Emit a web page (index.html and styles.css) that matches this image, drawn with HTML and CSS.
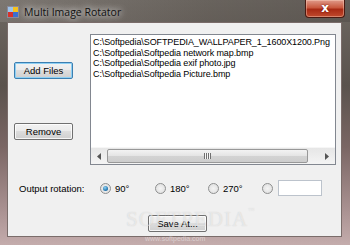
FILE: index.html
```html
<!DOCTYPE html>
<html>
<head>
<meta charset="utf-8">
<link rel="stylesheet" href="styles.css">
</head>
<body>
<div class="window">
  <div class="titlebar">
    <svg class="app-icon" width="12" height="12" viewBox="0 0 12 12">
      <rect x="0.5" y="0.5" width="11" height="11" fill="#f4f4f4" stroke="#8a8a9a"/>
      <rect x="6" y="1" width="5" height="5" fill="#f6c21c"/>
      <rect x="1" y="6" width="5" height="5" fill="#d8322a"/>
      <rect x="1" y="1" width="5" height="5" fill="#9cc3ea"/>
      <rect x="6" y="6" width="5" height="5" fill="#3b6fd0"/>
    </svg>
    <span class="title">Multi Image Rotator</span>
    <div class="close"><span>x</span></div>
  </div>
  <div class="client">
    <div class="top">
      <div class="buttons">
        <button class="btn default">Add Files</button>
        <button class="btn remove">Remove</button>
      </div>
      <div class="listbox">
        <div class="items">
          <div>C:\Softpedia\SOFTPEDIA_WALLPAPER_1_1600X1200.Png</div>
          <div>C:\Softpedia\Softpedia network map.bmp</div>
          <div>C:\Softpedia\Softpedia exif photo.jpg</div>
          <div>C:\Softpedia\Softpedia Picture.bmp</div>
        </div>
        <div class="hscroll">
          <div class="arrow"><svg width="4" height="7" viewBox="0 0 4 7"><path d="M4 0 L0 3.5 L4 7 Z" fill="#555"/></svg></div>
          <div class="thumb"><span class="grip"></span></div>
          <div class="track"></div>
          <div class="arrow"><svg width="4" height="7" viewBox="0 0 4 7"><path d="M0 0 L4 3.5 L0 7 Z" fill="#555"/></svg></div>
        </div>
      </div>
    </div>
    <div class="options">
      <span class="label">Output rotation:</span>
      <span class="opt o1"><span class="radio checked"></span>90°</span>
      <span class="opt o2"><span class="radio"></span>180°</span>
      <span class="opt o3"><span class="radio"></span>270°</span>
      <span class="opt o4"><span class="radio"></span></span>
      <span class="textbox"></span>
    </div>
    <div class="bottom">
      <button class="btn">Save At...</button>
    </div>
    <div class="watermark">SOFTPEDIA<sup>™</sup></div>
  </div>
  <div class="wm-url">www.softpedia.com</div>
</div>
</body>
</html>
```

FILE: styles.css
```css
html, body {
  margin: 0;
  padding: 0;
  width: 350px;
  height: 245px;
  overflow: hidden;
  background: #7a6a68;
}
.window {
  position: relative;
  width: 350px;
  height: 245px;
  box-sizing: border-box;
  display: flex;
  flex-direction: column;
  padding: 0 8px 8px 7px;
  background: linear-gradient(to bottom, #6e6862 0%, #5a524d 35%, #7a6664 60%, #a89090 85%, #c4acac 100%);
  font-family: "Liberation Sans", Arial, sans-serif;
  font-size: 9px;
  color: #000;
}
.titlebar {
  height: 22px;
  display: flex;
  align-items: flex-start;
  background: linear-gradient(to right, rgba(255,255,255,0.1), rgba(0,0,0,0.05) 60%, rgba(0,0,0,0.12));
  margin: 0 -8px 0 -7px;
  padding-left: 7px;
}
.app-icon {
  margin-top: 6px;
  flex: none;
}
.title {
  margin-left: 5px;
  margin-top: 5px;
  font-family: "Open Sans", "Noto Sans", sans-serif;
  font-size: 10.5px;
  color: #111;
  text-shadow: 0 0 6px rgba(255,255,255,0.9), 0 0 10px rgba(255,255,255,0.6);
}
.close {
  margin-left: auto;
  margin-right: 5px;
  width: 40px;
  height: 18px;
  box-sizing: border-box;
  border: 1px solid #4a1a12;
  border-top: none;
  border-radius: 0 0 4px 4px;
  background: linear-gradient(to bottom, #e09a8a 0%, #c8583e 45%, #a82a14 55%, #c04a2e 100%);
  display: flex;
  align-items: center;
  justify-content: center;
  box-shadow: inset 0 0 0 1px rgba(255,220,200,0.4);
}
.close span {
  color: #fff;
  font-family: "DejaVu Sans", sans-serif;
  font-weight: bold;
  font-size: 12px;
  line-height: 12px;
  margin-top: -2px;
  text-shadow: 0 0 2px #600;
}
.client {
  position: relative;
  flex: 1;
  background: #f0f0f0;
  border: 1px solid #7a6c6a;
  padding: 11px 0 0 6px;
  display: flex;
  flex-direction: column;
  overflow: hidden;
}
.top {
  display: flex;
}
.buttons {
  width: 76px;
  display: flex;
  flex-direction: column;
  align-items: flex-start;
}
.btn {
  width: 59px;
  height: 17px;
  padding: 0;
  box-sizing: border-box;
  border: 1px solid #707070;
  border-radius: 2px;
  background: linear-gradient(to bottom, #f2f2f2 0%, #ebebeb 45%, #dddddd 50%, #cfcfcf 100%);
  font-family: "Liberation Sans", Arial, sans-serif;
  font-size: 9.5px;
  color: #000;
  box-shadow: inset 0 0 0 1px rgba(255,255,255,0.8);
}
.btn.default {
  margin-top: 28px;
  border-color: #3c7fb1;
  box-shadow: inset 0 0 0 1px #8ed0f4;
}
.btn.remove {
  margin-top: 44px;
}
.listbox {
  width: 246px;
  height: 131px;
  box-sizing: border-box;
  border: 1px solid #828790;
  background: #fff;
  display: flex;
  flex-direction: column;
}
.items {
  flex: 1;
  padding: 2px 0 0 2px;
  line-height: 10.5px;
  font-size: 9px;
  letter-spacing: -0.1px;
  white-space: nowrap;
  overflow: hidden;
}
.hscroll {
  height: 16px;
  display: flex;
  background: linear-gradient(to bottom, #e6e6e6, #f4f4f4);
  border-top: 1px solid #f6f6f6;
}
.arrow {
  width: 16px;
  display: flex;
  align-items: center;
  justify-content: center;
}
.thumb {
  width: 201px;
  box-sizing: border-box;
  border: 1px solid #989898;
  border-radius: 2px;
  margin: 1px 0;
  background: linear-gradient(to bottom, #f3f3f3 0%, #e4e4e4 50%, #d3d3d3 51%, #cdcdcd 100%);
  display: flex;
  align-items: center;
  justify-content: center;
}
.grip {
  width: 7px;
  height: 6px;
  background: repeating-linear-gradient(to right, #707070 0 1px, #f6f6f6 1px 2px);
}
.track {
  flex: 1;
}
.options {
  margin-top: 15px;
  height: 16px;
  display: flex;
  align-items: center;
  font-size: 9.5px;
}
.label {
  margin-left: 5px;
  width: 81px;
}
.opt {
  display: flex;
  align-items: center;
}
.o1 { width: 55px; }
.o2 { width: 53px; }
.o3 { width: 54px; }
.o4 { width: 16px; }
.radio {
  width: 11px;
  height: 11px;
  box-sizing: border-box;
  border-radius: 50%;
  border: 1px solid #8e8f8f;
  background: radial-gradient(circle at 50% 50%, #f4f4f4 0%, #dcdcdc 100%);
  margin-right: 4px;
  display: inline-block;
  position: relative;
}
.radio.checked::after {
  content: "";
  position: absolute;
  left: 2px;
  top: 2px;
  width: 5px;
  height: 5px;
  border-radius: 50%;
  background: radial-gradient(circle at 40% 35%, #8fd3f5 0%, #1c6ea8 70%, #0d4a7a 100%);
}
.textbox {
  width: 44px;
  height: 16px;
  box-sizing: border-box;
  border: 1px solid #bcc3cc;
  background: #fff;
}
.bottom {
  margin-top: 19px;
  display: flex;
  justify-content: center;
}
.watermark {
  position: absolute;
  left: 118px;
  top: 184px;
  font-family: "Liberation Serif", serif;
  font-size: 21px;
  letter-spacing: 1px;
  color: rgba(255,255,255,0.5);
  text-shadow: 0 0 1px rgba(120,120,120,0.3);
  pointer-events: none;
}
.watermark sup {
  font-size: 6px;
  vertical-align: top;
}
.wm-url {
  position: absolute;
  left: 145px;
  top: 235px;
  font-size: 7px;
  color: rgba(255,255,255,0.45);
}
```
